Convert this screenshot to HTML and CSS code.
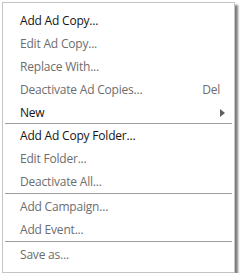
FILE: index.html
```html
<!DOCTYPE html>
<html>
<head>
<meta charset="utf-8">
<link rel="stylesheet" href="styles.css">
</head>
<body>
<div class="menu">
  <div class="item">Add Ad Copy...</div>
  <div class="item disabled">Edit Ad Copy...</div>
  <div class="item disabled">Replace With...</div>
  <div class="item disabled"><span>Deactivate Ad Copies...</span><span class="key">Del</span></div>
  <div class="item"><span>New</span><span class="arrow"></span></div>
  <div class="sep sep-a"></div>
  <div class="item">Add Ad Copy Folder...</div>
  <div class="item disabled">Edit Folder...</div>
  <div class="item disabled">Deactivate All...</div>
  <div class="sep"></div>
  <div class="item disabled">Add Campaign...</div>
  <div class="item disabled">Add Event...</div>
  <div class="sep"></div>
  <div class="item disabled">Save as...</div>
</div>
</body>
</html>
```
FILE: styles.css
```css
html, body {
  margin: 0;
  padding: 0;
  background: #ffffff;
}
.menu {
  margin: 2px 0 0 2px;
  width: 231px;
  height: 263px;
  border: 1px solid #c4c4c4;
  background: #ffffff;
  box-shadow: 3px 3px 2px rgba(0, 0, 0, 0.5);
  padding-top: 6px;
  box-sizing: content-box;
  display: flex;
  flex-direction: column;
  font-family: "Open Sans", "Noto Sans", sans-serif;
  font-size: 12px;
  letter-spacing: -0.2px;
  color: #151515;
}
.item {
  height: 23px;
  line-height: 23px;
  padding: 0 14px 0 17px;
  display: flex;
  justify-content: space-between;
  align-items: center;
  white-space: nowrap;
}
.disabled {
  color: #6d6d6d;
}
.key {
  color: #6d6d6d;
}
.arrow {
  width: 0;
  height: 0;
  border-top: 4.5px solid transparent;
  border-bottom: 4.5px solid transparent;
  border-left: 5px solid #606060;
  margin-right: -5px;
}
.sep {
  height: 1px;
  background: #a0a0a0;
  margin: 0 2px 1px 2px;
}
.sep-a {
  margin-top: -1px;
  margin-bottom: 0;
}
```
